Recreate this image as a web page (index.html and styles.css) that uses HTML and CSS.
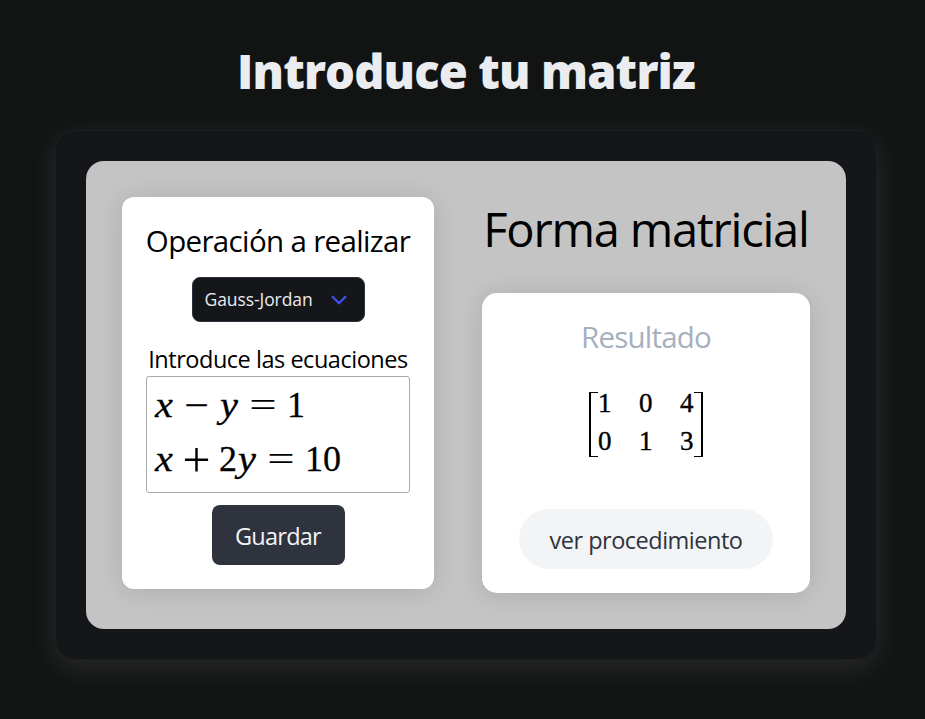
FILE: index.html
```html
<!DOCTYPE html>
<html lang="es">
<head>
<meta charset="utf-8">
<title>Introduce tu matriz</title>
<link rel="stylesheet" href="styles.css">
</head>
<body>
<h1 class="title"><span>Introduce tu matriz</span></h1>
<main class="panel">
  <div class="board">
    <section class="card form">
      <h2 class="heading"><span>Operación a realizar</span></h2>
      <div class="select"><span class="select-text">Gauss-Jordan</span>
        <svg class="chevron" width="16" height="10" viewBox="0 0 16 10"><path d="M1 1.2 8 8.2 15 1.2" fill="none" stroke="#3f51f0" stroke-width="2.3"/></svg>
      </div>
      <div class="label"><span>Introduce las ecuaciones</span></div>
      <div class="equations">
        <div class="eq"><i class="v">x</i><b class="op minus">−</b><i class="v">y</i><b class="op rel">=</b><span class="n">1</span></div>
        <div class="eq"><i class="v">x</i><b class="op plus">+</b><span class="n">2</span><i class="v">y</i><b class="op rel">=</b><span class="n">10</span></div>
      </div>
      <button class="save"><span>Guardar</span></button>
    </section>
    <section class="side">
      <h2 class="big"><span>Forma matricial</span></h2>
      <div class="card result">
        <h3 class="result-title"><span>Resultado</span></h3>
        <div class="matrix">
          <span class="bracket left"></span>
          <div class="cells"><span>1</span><span>0</span><span>4</span><span>0</span><span>1</span><span>3</span></div>
          <span class="bracket right"></span>
        </div>
        <button class="steps"><span>ver procedimiento</span></button>
      </div>
    </section>
  </div>
</main>
</body>
</html>
```
FILE: styles.css
```css
* { box-sizing: border-box; }
body {
  margin: 0;
  height: 719px;
  overflow: hidden;
  background: #121413;
  font-family: "Open Sans", "Noto Sans", sans-serif;
  color: #000;
}
h1, h2, h3 { margin: 0; font-weight: 400; white-space: nowrap; }
button { border: 0; padding: 0; font-family: inherit; white-space: nowrap; }
.title {
  padding: 39px 0 0 7px;
  height: 130px;
  text-align: center;
  font-size: 47px;
  line-height: 64px;
  font-weight: 800;
  letter-spacing: -0.85px;
  color: #ebecf0;
}
.panel {
  width: 822px;
  height: 530px;
  margin-left: 55px;
  padding: 30px;
  border: 1px solid #1d1f1f;
  border-radius: 20px;
  background: #15161a;
  box-shadow: 0 8px 32px rgba(255, 255, 255, .1);
}
.board {
  display: flex;
  gap: 48px;
  height: 468px;
  padding: 36px;
  border-radius: 18px;
  background: #c4c4c4;
}
.card { background: #fff; box-shadow: 0 2px 24px rgba(0, 0, 0, .12); }
.form {
  display: flex;
  flex-direction: column;
  align-items: center;
  width: 312px;
  height: 392px;
  padding: 24px;
  border-radius: 12px;
}
.heading { height: 56px; font-size: 29.5px; line-height: 40px; letter-spacing: -.65px; }
.select {
  display: flex;
  align-items: center;
  justify-content: space-between;
  flex: none;
  width: 173px;
  height: 45px;
  padding: 0 17px 0 12px;
  border: 1px solid #2e323c;
  border-radius: 8px;
  background: #15161a;
  color: #ebecf0;
  font-size: 17.5px;
}
.select-text { margin-top: -2px; letter-spacing: -.08px; }
.label { margin-top: 21px; height: 33px; font-size: 23.5px; line-height: 33px; letter-spacing: -.47px; white-space: nowrap; }
.equations {
  width: 264px;
  height: 117px;
  padding: 1px 7px 0;
  border: 1px solid #a9a9a9;
  border-radius: 3px;
}
.eq {
  display: flex;
  height: 54px;
  font: 36px/54px "Liberation Serif", serif;
}
.v { width: 20px; text-align: center; transform: scaleX(1.12); -webkit-text-stroke: .3px #000; }
.n { min-width: 18px; -webkit-text-stroke: .3px #000; }
.op { width: 45px; text-align: center; font-weight: 400; transform: scaleX(1.15); }
.minus { transform: scaleX(1.2); -webkit-text-stroke: .4px #000; }
.plus { transform: translateY(3px) scale(1.38); transform-origin: 50% 60%; }
.rel { width: 48px; transform: scaleX(1.35); }
.save {
  margin-top: 12px;
  flex: none;
  width: 133px;
  height: 60px;
  padding-top: 2px;
  border-radius: 8px;
  background: #2f333e;
  color: #f3f4f6;
  font-size: 23.5px;
  letter-spacing: -.75px;
}
.side { width: 328px; }
.big { height: 96px; font-size: 47px; line-height: 64px; text-align: center; letter-spacing: -1.2px; }
.result {
  display: flex;
  flex-direction: column;
  align-items: center;
  height: 300px;
  padding-top: 24px;
  border-radius: 15px;
}
.result-title { height: 40px; font-size: 29.5px; line-height: 40px; letter-spacing: -.8px; color: #a6afc0; }
.matrix { display: flex; margin: 35px 0 52px; height: 65px; }
.bracket { width: 9px; height: 65px; border: 2px solid #000; border-width: 1px 2px; }
.left { border-right: 0; }
.right { border-left: 0; }
.cells {
  display: grid;
  grid-template-columns: 14px 14px 14px;
  grid-auto-rows: 38px;
  column-gap: 27px;
  margin: -8px 0 0;
  font: 27px/38px "Liberation Serif", serif;
  -webkit-text-stroke: .4px #000;
}
.steps {
  width: 254px;
  height: 60px;
  padding-top: 2px;
  border-radius: 30px;
  background: #f3f4f6;
  color: #2f333e;
  font-size: 23.5px;
  letter-spacing: -.5px;
}
```
